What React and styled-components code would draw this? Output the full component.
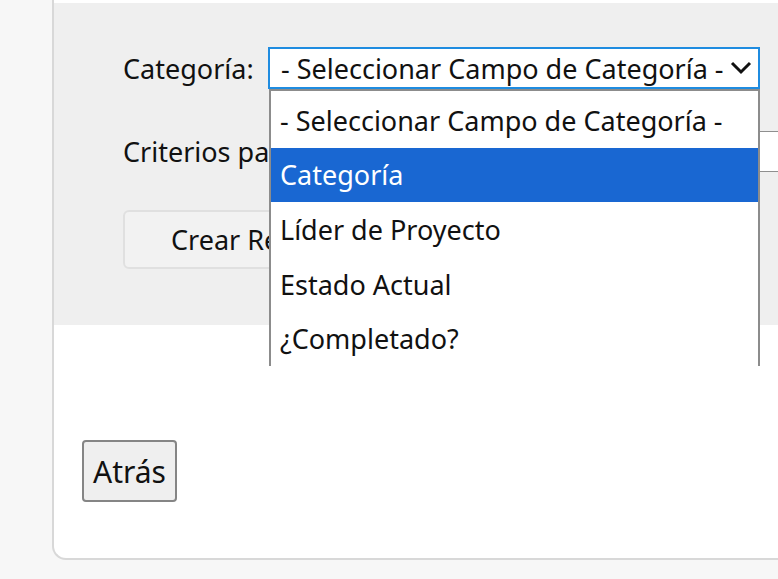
import React from 'react';
import styled, { createGlobalStyle } from 'styled-components';

const GlobalStyle = createGlobalStyle`
	html, body {
		margin: 0;
		padding: 0;
		background: #f7f7f7;
		overflow: hidden;
	}
	body {
		font-family: 'Noto Sans', 'Open Sans', sans-serif;
		color: #111;
	}
`;

const Page = styled.div`
	width: 778px;
	height: 579px;
	padding-left: 52px;
	box-sizing: border-box;
	overflow: hidden;
`;

const Card = styled.div`
	width: 900px;
	padding-top: 3px;
	background: #fff;
	border-left: 2px solid #d8d8d8;
	border-bottom: 2px solid #d8d8d8;
	border-bottom-left-radius: 14px;
`;

const FormPanel = styled.div`
	background: #efefef;
	padding: 44px 0 56px 69px;
	display: flex;
	flex-direction: column;
	gap: 42px;
`;

const Row = styled.div`
	display: flex;
	align-items: center;
`;

const Label = styled.label`
	font-size: 27px;
	width: ${(p) => p.width || 'auto'};
	flex-shrink: 0;
	white-space: nowrap;
`;

const SelectWrap = styled.div`
	position: relative;
	width: 492px;
`;

const SelectBox = styled.div`
	height: 42px;
	box-sizing: border-box;
	border: 2px solid #1f8ce0;
	background: #fff;
	display: flex;
	align-items: center;
	justify-content: space-between;
	padding: 0 6px 0 11px;
	font-size: 27px;
	white-space: nowrap;
`;

const Chevron = () => (
	<svg width="22" height="14" viewBox="0 0 22 14">
		<polyline points="2,2 11,11 20,2" fill="none" stroke="#111" strokeWidth="3" />
	</svg>
);

const OptionList = styled.ul`
	position: absolute;
	top: 42px;
	left: 1px;
	width: 491px;
	height: 277px;
	box-sizing: border-box;
	margin: 0;
	padding: 2px 0 0;
	list-style: none;
	background: #fff;
	border: 2px solid #8c8c8c;
	border-bottom: none;
	overflow: hidden;
	z-index: 10;
`;

const Option = styled.li`
	height: 54.6px;
	display: flex;
	align-items: center;
	padding-left: 9px;
	font-size: 27px;
	white-space: nowrap;
	background: ${(p) => (p.active ? '#1967d2' : '#fff')};
	color: ${(p) => (p.active ? '#fff' : '#111')};
`;

const TextInput = styled.div`
	height: 41px;
	flex: 1;
	box-sizing: border-box;
	background: #fff;
	border: 1px solid #8f8f8f;
`;

const CreateButton = styled.button`
	align-self: flex-start;
	height: 59px;
	padding: 0 46px;
	font-family: inherit;
	font-size: 27px;
	color: #111;
	background: #f2f2f2;
	border: 2px solid #e0e0e0;
	border-radius: 6px;
	margin-top: -4px;
`;

const Footer = styled.div`
	padding: 115px 0 56px 28px;
`;

const BackButton = styled.button`
	width: 95px;
	height: 62px;
	font-family: inherit;
	font-size: 30px;
	color: #111;
	background: #efefef;
	border: 2px solid #858585;
	border-radius: 4px;
	padding: 0;
`;

const options = [
	'- Seleccionar Campo de Categoría -',
	'Categoría',
	'Líder de Proyecto',
	'Estado Actual',
	'¿Completado?',
];

const App = () => (
	<Page>
		<GlobalStyle />
		<Card>
			<FormPanel>
				<Row>
					<Label width="145px">Categoría:</Label>
					<SelectWrap>
						<SelectBox>
							<span>- Seleccionar Campo de Categoría -</span>
							<Chevron />
						</SelectBox>
						<OptionList>
							{options.map((o, i) => (
								<Option key={o} active={i === 1}>
									{o}
								</Option>
							))}
						</OptionList>
					</SelectWrap>
				</Row>
				<Row>
					<Label>Criterios para el Reporte:</Label>
					<TextInput />
				</Row>
				<CreateButton>Crear Reporte</CreateButton>
			</FormPanel>
			<Footer>
				<BackButton>Atrás</BackButton>
			</Footer>
		</Card>
	</Page>
);

export default App;
